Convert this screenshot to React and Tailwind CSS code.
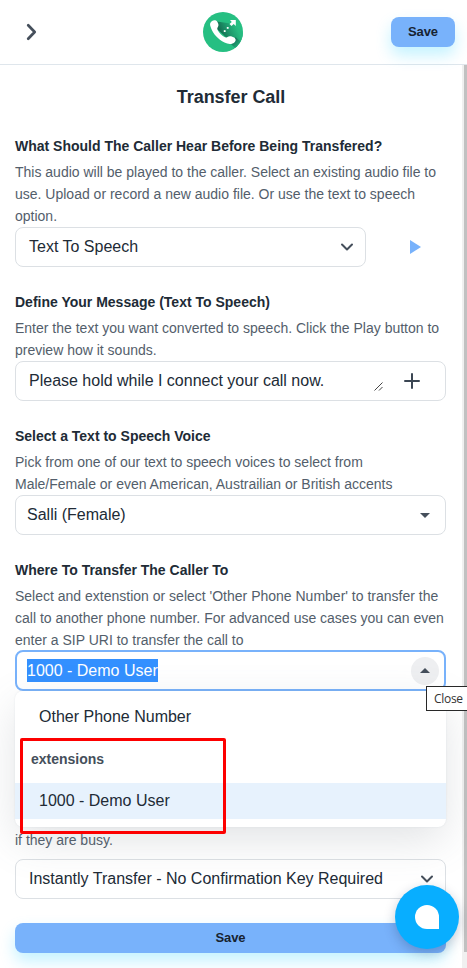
import React from "react";

function Chevron({ className, d = "M2 3.5l5 5 5-5", width = 2 }) {
  return (
    <svg className={className} viewBox="0 0 14 12" fill="none" stroke="currentColor" strokeWidth={width} strokeLinecap="round" strokeLinejoin="round">
      <path d={d} />
    </svg>
  );
}

function Logo() {
  return (
    <svg className="h-10 w-10" viewBox="0 0 40 40">
      <defs>
        <linearGradient id="shade" x1="15" y1="20" x2="32" y2="12" gradientUnits="userSpaceOnUse">
          <stop offset="0" stopColor="#11634a" />
          <stop offset="0.5" stopColor="#1c9469" />
          <stop offset="1" stopColor="#26bb80" />
        </linearGradient>
        <linearGradient id="tail" x1="30" y1="29" x2="36" y2="35" gradientUnits="userSpaceOnUse">
          <stop offset="0" stopColor="#16745a" />
          <stop offset="1" stopColor="#25b57d" />
        </linearGradient>
        <clipPath id="disc"><circle cx="20" cy="20" r="20" /></clipPath>
      </defs>
      <circle cx="20" cy="20" r="20" fill="#26bf82" />
      <g clipPath="url(#disc)">
        <path d="M14 9.500L31 12 40 21V33L32 25 25 27 14 17z" fill="url(#shade)" />
        <path d="M32.500 25L40 32V40H36L28 32z" fill="url(#tail)" />
      </g>
      <path d="M7.300 11C8.500 8.300 12.300 7 14.300 9.700 15.600 11.700 15.800 13.500 15 14.800c-.9 1.500-1 2.300-.1 3.700 1.700 2.600 3.900 4.900 6.500 6.600 1.200.7 2 .6 3.100-.2 1.700-1.200 5-.6 7.200 1 1.400 1.100 1.200 2.800.1 4-2.300 2.600-6.300 2.700-10.300.7C15 27.200 10.200 22 8.200 16.500 7.300 14 6.700 12.500 7.300 11z" fill="#fff" />
      <path d="M27 8H32.800V14L30.700 12 28.500 14.100 26.500 12.100 28.800 10z" fill="#fff" />
      <g fill="#fff">
        <rect x="23.800" y="15" width="1.800" height="1.800" />
        <rect x="20.800" y="18.200" width="1.800" height="1.800" />
      </g>
    </svg>
  );
}

function Section({ label, lines, children }) {
  return (
    <section className="mb-6">
      <h2 className="h-[22px] text-[14px] leading-[22px] font-bold whitespace-nowrap text-[#212b36]">{label}</h2>
      <Description lines={lines} className="mt-1" />
      {children}
    </section>
  );
}

function Description({ lines, className = "" }) {
  return (
    <div className={`text-[14px] leading-[22px] whitespace-nowrap text-[#535e6b] ${className}`}>
      {lines.map((line) => <p key={line}>{line}</p>)}
    </div>
  );
}

function Triangle({ up = false }) {
  return (
    <svg className="h-[5px] w-[10px]" viewBox="0 0 10 5" fill="#454f5b">
      <path d={up ? "M0 5L5 0l5 5z" : "M0 0l5 5 5-5z"} />
    </svg>
  );
}

export default function App() {
  return (
    <div className="relative h-[968px] w-[467px] overflow-hidden bg-white font-['Liberation_Sans',Arial,sans-serif] text-[#212b36]">
      <header className="grid h-[65px] grid-cols-3 items-center border-b border-[#dfe6ec] pr-3">
        <Chevron className="ml-6 h-[18px] w-[14px] text-[#454f5b]" d="M4.200 -.700l6.500 6.700-6.500 6.700" width={2.7} />
        <div className="ml-[51px] flex"><Logo /></div>
        <button className="h-[30px] w-16 justify-self-end rounded-lg bg-[#78b2fb] text-[13px] font-bold tracking-[-0.1px] text-[#172331] shadow-[0_8px_16px_0_rgba(0,200,255,0.24)]">Save</button>
      </header>

      <div className="flex h-[903px]">
        <main className="w-[462px] pl-[15px]">
          <h1 className="mb-[22px] h-12 w-[432px] pt-[18px] text-center text-[18px] leading-7 font-bold tracking-[-0.05px]">Transfer Call</h1>

          <Section
            label="What Should The Caller Hear Before Being Transfered?"
            lines={["This audio will be played to the caller. Select an existing audio file to", "use. Upload or record a new audio file. Or use the text to speech", "option."]}
          >
            <div className="flex h-10 items-center">
              <div className="flex h-10 w-[351px] items-center justify-between rounded-lg border border-[#dce0e4] pr-[11px] pl-[13px]">
                <span className="text-[16px]">Text To Speech</span>
                <Chevron className="h-3 w-[14px] text-[#454f5b]" />
              </div>
              <svg className="ml-[44px] h-[14px] w-[11px]" viewBox="0 0 11 14" fill="#78b2fb"><path d="M0 0l11 7-11 7z" /></svg>
            </div>
          </Section>

          <Section
            label="Define Your Message (Text To Speech)"
            lines={["Enter the text you want converted to speech. Click the Play button to", "preview how it sounds."]}
          >
            <div className="flex h-10 w-[431px] items-center rounded-lg border border-[#dce0e4] pl-[13px]">
              <span className="w-[345px] text-[16px] whitespace-nowrap">Please hold while I connect your call now.</span>
              <svg className="mt-[11px] h-[9px] w-[9px]" viewBox="0 0 9 9" stroke="#454545" strokeWidth="1"><path d="M.5 8.500l8-8M5 8.500l3.500-3.500" /></svg>
              <svg className="ml-[21px] h-4 w-4" viewBox="0 0 16 16" stroke="#3b4653" strokeWidth="2" strokeLinecap="round"><path d="M8 1v14M1 8h14" /></svg>
            </div>
          </Section>

          <Section
            label="Select a Text to Speech Voice"
            lines={["Pick from one of our text to speech voices to select from", "Male/Female or even American, Austrailian or British accents"]}
          >
            <div className="flex h-10 w-[431px] items-center justify-between rounded-lg border border-[#dce0e4] pr-[15px] pl-[11px]">
              <span className="text-[16px]">Salli (Female)</span>
              <Triangle />
            </div>
          </Section>

          <section>
            <h2 className="h-[22px] text-[14px] leading-[22px] font-bold">Where To Transfer The Caller To</h2>
            <Description
              className="mt-1"
              lines={["Select and extenstion or select 'Other Phone Number' to transfer the", "call to another phone number. For advanced use cases you can even", "enter a SIP URI to transfer the call to"]}
            />
            <div className="-mt-px flex h-[41px] w-[431px] items-center justify-between rounded-lg border-2 border-[#78b2fb] pr-[5px] pl-[10px]">
              <span className="mb-px h-[23px] bg-[#3390ff] text-[16px] leading-[23px] text-white">1000 - Demo User</span>
              <span className="flex h-7 w-7 items-center justify-center rounded-full bg-[#eeeff1]"><Triangle up /></span>
            </div>
            <div className="relative z-10 w-[431px] rounded-lg bg-white py-2 text-[16px] shadow-[0_0_2px_0_rgba(145,158,171,0.2),0_14px_44px_-2px_rgba(100,108,120,0.2)]">
              <div className="h-9 pl-6 leading-9">Other Phone Number</div>
              <div className="h-12 pl-4 text-[14px] leading-[48px] font-bold text-[#454f5b]">extensions</div>
              <div className="h-9 bg-[#e7f2fd] pl-6 leading-9">1000 - Demo User</div>
              <div className="absolute top-[47px] left-[5px] h-[96px] w-[206px] rounded-[2px] border-[3px] border-[#fd0000]" />
              <div className="absolute top-[-5px] left-[411px] h-[25px] w-[50px] border border-[#282828] bg-white pl-[7px] font-['Open_Sans','Noto_Sans',sans-serif] text-[12px] leading-[23px] tracking-[-0.3px] text-[#333]">Close</div>
            </div>
          </section>

          <section className="mt-[2px]">
            <Description lines={["if they are busy."]} />
            <div className="mt-2 flex h-10 w-[431px] items-center justify-between rounded-lg border border-[#dce0e4] pr-[11px] pl-[13px]">
              <span className="text-[16px] whitespace-nowrap">Instantly Transfer - No Confirmation Key Required</span>
              <Chevron className="h-3 w-[14px] text-[#454f5b]" />
            </div>
            <button className="mt-6 block h-[30px] w-[431px] rounded-lg bg-[#78b2fb] text-[13px] font-bold tracking-[-0.1px] text-[#172331] shadow-[0_8px_16px_0_rgba(0,200,255,0.24)]">Save</button>
          </section>
        </main>
        <aside className="w-[5px] bg-[#f0f0f0] pl-[2px]">
          <div className="h-[887px] bg-[#c1c1c1]" />
        </aside>
      </div>

      <button className="absolute top-[885px] left-[395px] z-20 flex h-16 w-16 items-center justify-center rounded-full bg-[#08aeff] shadow-[0_4px_12px_rgba(20,40,80,0.25)]">
        <span className="h-6 w-6 rounded-full rounded-br-none bg-white" />
      </button>
    </div>
  );
}
